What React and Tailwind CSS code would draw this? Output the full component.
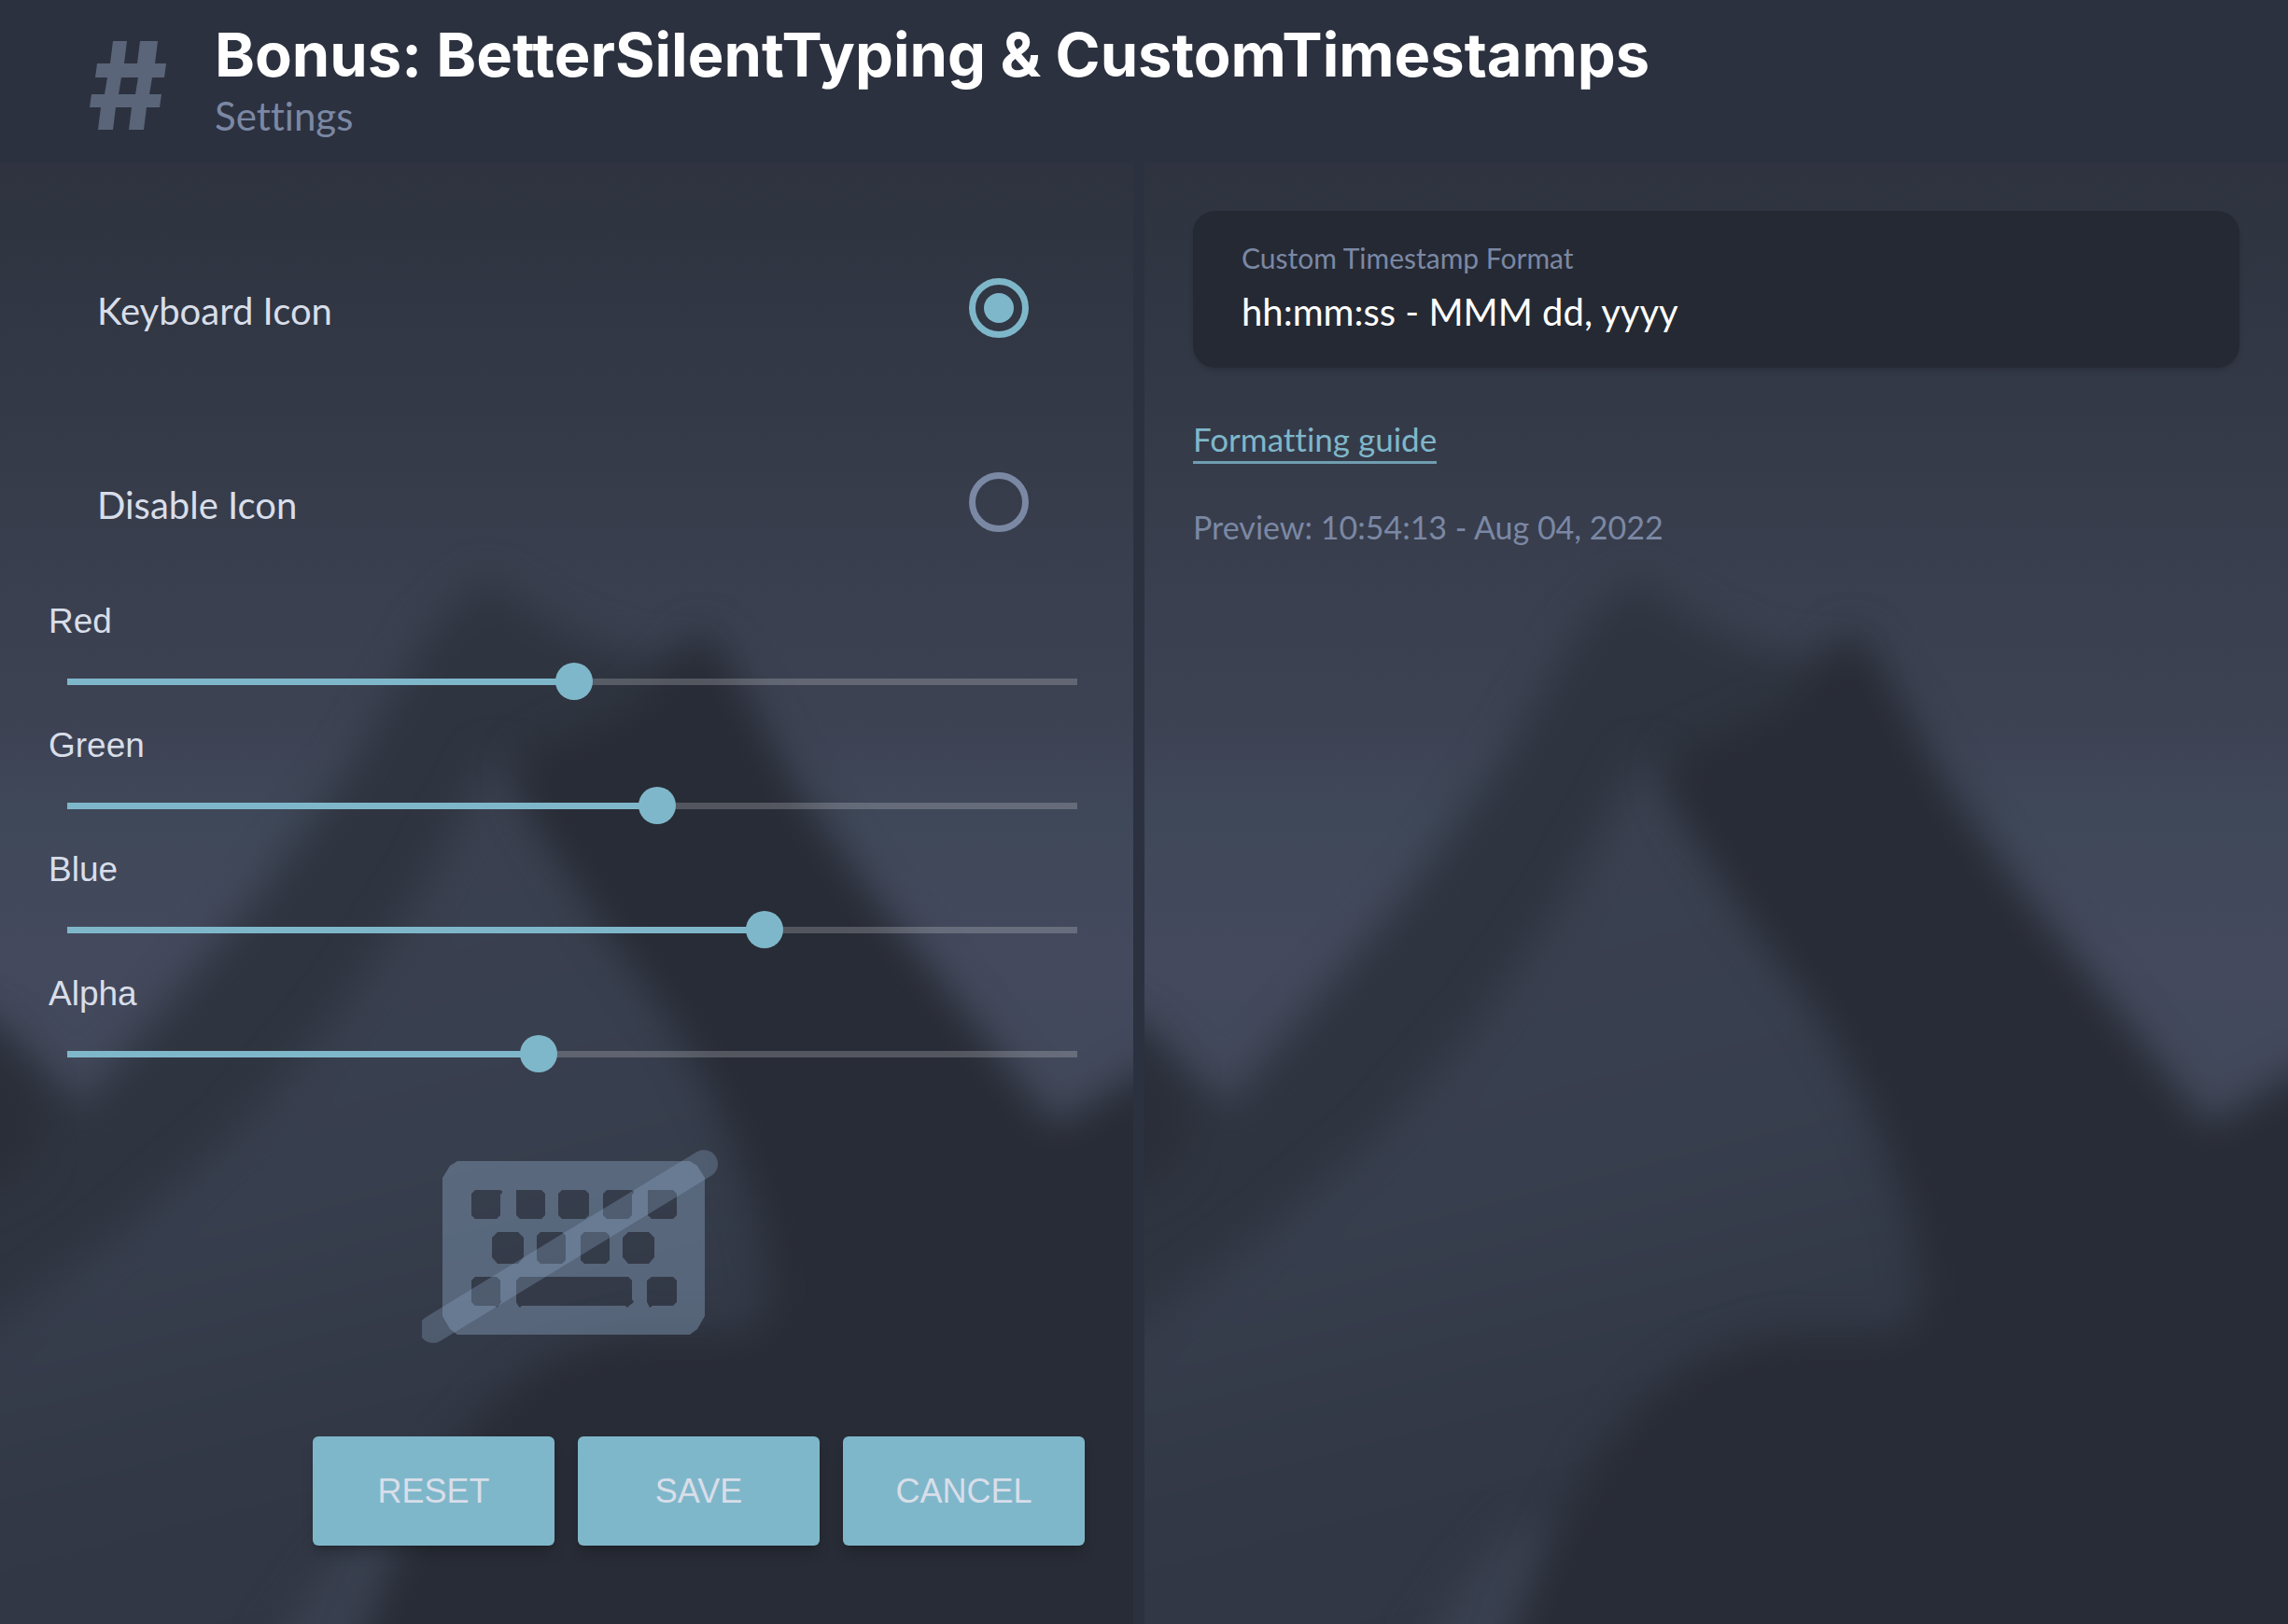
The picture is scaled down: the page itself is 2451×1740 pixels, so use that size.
import React, { useState } from "react";

function Backdrop({ id }) {
  return (
    <svg
      aria-hidden="true"
      viewBox="0 0 780 1002"
      preserveAspectRatio="none"
      className="absolute inset-0 h-full w-full"
    >
      <defs>
        <linearGradient id={id + "sky"} x1="0" y1="0" x2="0" y2="1">
          <stop offset="0" stopColor="#2e333f" />
          <stop offset="0.06" stopColor="#2f3541" />
          <stop offset="0.16" stopColor="#343947" />
          <stop offset="0.28" stopColor="#393f4e" />
          <stop offset="0.38" stopColor="#3d4253" />
          <stop offset="0.45" stopColor="#3f4859" />
          <stop offset="0.54" stopColor="#44495d" />
          <stop offset="0.64" stopColor="#42495b" />
        </linearGradient>
        <linearGradient id={id + "slope"} gradientUnits="userSpaceOnUse" x1="260" y1="430" x2="400" y2="980">
          <stop offset="0" stopColor="#3b4150" />
          <stop offset="0.45" stopColor="#373e4d" />
          <stop offset="0.75" stopColor="#323845" />
          <stop offset="1" stopColor="#303643" />
        </linearGradient>
        <filter id={id + "near"} colorInterpolationFilters="sRGB" x="-20%" y="-20%" width="140%" height="140%">
          <feGaussianBlur stdDeviation="13" />
        </filter>
        <filter id={id + "far"} colorInterpolationFilters="sRGB" x="-20%" y="-20%" width="140%" height="140%">
          <feGaussianBlur stdDeviation="14" />
        </filter>
      </defs>
      <rect width="780" height="1002" fill={"url(#" + id + "sky)"} />
      <path
        filter={"url(#" + id + "near)"}
        fill="#2f3540"
        d="M-60 560 L0 592 L56 645 L112 579 L177 502 L242 411 L296 320 L333 284 L388 319 L438 338 L480 338 L560 600 L540 1060 L-60 1060Z"
      />
      <path
        filter={"url(#" + id + "near)"}
        fill="#2a2e39"
        d="M-60 560 L0 605 L34 650 L20 690 L-60 730Z"
      />
      <path
        filter={"url(#" + id + "far)"}
        fill={"url(#" + id + "slope)"}
        d="M342 405 L284 510 L228 590 L160 668 L85 732 L-60 840 L-60 1100 L600 1100 L600 700 L440 520Z"
      />
      <path
        filter={"url(#" + id + "far)"}
        fill="#3a4150"
        d="M258 930 L222 970 L180 1030 L280 1030 L280 940Z"
      />
      <path
        filter={"url(#" + id + "near)"}
        fill="#282c36"
        d="M484 320 L504 348 L547 425 L597 497 L647 560 L696 623 L726 660 L780 627 L860 590 L860 1060 L236 1060 L254 1002 L279 945 L308 887 L348 842 L380 820 L428 804 L517 804 L532 781 L524 728 L500 661 L466 594 L411 517 L365 445 L355 415 L370 402 L433 374Z"
      />
    </svg>
  );
}

function Radio({ id, label, checked, onChange }) {
  return (
    <div className="flex h-52 items-center justify-between pr-28 pl-26">
      <label htmlFor={id} className="pt-1.5 text-[40px] leading-12 text-[#d8dee9]">
        {label}
      </label>
      <input
        id={id}
        type="radio"
        name="icon-mode"
        checked={checked}
        onChange={onChange}
        className="size-16 appearance-none rounded-full border-[7px] border-[#7b88a4] bg-clip-content p-[9px] checked:border-[#7fb7ca] checked:bg-[#7fb7ca]"
      />
    </div>
  );
}

function ColorSlider({ id, label, initial }) {
  const [value, setValue] = useState(initial);
  return (
    <div className="flex h-[133px] flex-col">
      <label
        htmlFor={id}
        className="pl-[52px] font-['Liberation_Sans',sans-serif] text-[37px] leading-12 text-[#d8dee9]"
      >
        {label}
      </label>
      <div className="pr-10 pl-[52px]">
        <div className="relative mt-5 flex h-10 items-center">
          <div className="mx-5 flex h-[7px] grow bg-white/20">
            <div className="bg-[#7fb7ca]" style={{ width: (value / 1000) * 100 + "%" }} />
          </div>
          <input
            id={id}
            type="range"
            min="0"
            max="1000"
            value={value}
            onChange={(e) => setValue(Number(e.target.value))}
            className="absolute inset-0 h-10 w-full appearance-none bg-transparent [&::-webkit-slider-thumb]:size-10 [&::-webkit-slider-thumb]:appearance-none [&::-webkit-slider-thumb]:rounded-full [&::-webkit-slider-thumb]:bg-[#7fb7ca]"
          />
        </div>
      </div>
    </div>
  );
}

function KeyboardPreview() {
  return (
    <svg viewBox="0 0 318 210" className="h-[210px] w-[318px]" aria-label="Keyboard icon preview">
      <path
        fill="#8fa9c8"
        fillOpacity="0.4"
        fillRule="evenodd"
        d="M38 14H287L295 19L303 32V180L295 194L287 200H38L30 194L22 180V32L30 19Z
        M57 45l-4 4v23l4 4h23l4-4v-22l2-2v-2l-3-1z M101 45v27l4 4h23l4-4v-23l-4-4z M150 45l-4 4v23l4 4h25l4-4v-23l-4-4z M198 45l-4 4v23l4 4h23l4-4v-22l2-2v-2l-3-1z M242 45v27l4 4h23l4-4v-23l-4-4z
        M81 90l-6 6v21l6 7h22l6-7v-21l-6-6z M127 90l-4 4v26l4 4h23l4-4v-26l-4-4z M174 90l-4 4v26l4 4h23l4-4v-26l-4-4z M221 90l-6 6v21l6 7h22l6-7v-21l-6-6z
        M57 138l-4 4v23l4 4h21l2 2l2-2l3-4l-1-3v-20l-4-4z M105 138l-4 4v23l2 4l2 2l2-2h111l2 2l2-2l5-4l-2-3v-20l-4-4z M246 138l-5 4v23l3 6l3-2h22l4-4v-23l-4-4z"
      />
      <path d="M12 194L302 17" stroke="#8fa9c8" strokeOpacity="0.3" strokeWidth="30" strokeLinecap="round" />
    </svg>
  );
}

function ActionButton({ children }) {
  return (
    <button
      type="button"
      className="h-[117px] w-[259px] rounded-md bg-[#7fb7ca] font-['Liberation_Sans',sans-serif] text-[36px] text-[#d8dee9] shadow-lg shadow-black/20"
    >
      {children}
    </button>
  );
}

export default function App() {
  const [mode, setMode] = useState("keyboard");
  const [format, setFormat] = useState("hh:mm:ss - MMM dd, yyyy");
  return (
    <div className="flex min-h-screen flex-col bg-[#2c313f] font-['Lato',sans-serif] [font-variant-ligatures:none]">
      <header className="flex h-[174px] items-start">
        <svg viewBox="0 0 84 96" className="mt-11 ml-24 h-24 w-[84px] shrink-0" aria-hidden="true">
          <path
            fill="#5a6579"
            d="M25 0H40L37 24H51L54 0H73L70 24H82L80 39H67L64 57H77L75 71H61L58 95H42L45 71H28L25 95H9L12 71H0L2 57H16L19 39H6L8 24H22ZM34 39L31 57H49L52 39Z"
          />
        </svg>
        <div className="ml-[50px]">
          <h1 className="mt-5 font-['Inter',sans-serif] text-[65px] leading-[78px] font-bold text-white">
            Bonus: BetterSilentTyping &amp; CustomTimestamps
          </h1>
          <p className="text-[42px] leading-[52px] text-[#7b88a4]">Settings</p>
        </div>
      </header>

      <main className="flex grow gap-3">
        <section className="relative flex flex-[1214] flex-col overflow-hidden">
          <Backdrop id="l" />
          <div className="relative flex grow flex-col pt-[52px]">
            <Radio id="kb" label="Keyboard Icon" checked={mode === "keyboard"} onChange={() => setMode("keyboard")} />
            <Radio id="off" label="Disable Icon" checked={mode === "off"} onChange={() => setMode("off")} />
            <ColorSlider id="red" label="Red" initial={502} />
            <ColorSlider id="green" label="Green" initial={584} />
            <ColorSlider id="blue" label="Blue" initial={690} />
            <ColorSlider id="alpha" label="Alpha" initial={467} />
            <div className="flex justify-center pt-14 pl-2">
              <KeyboardPreview />
            </div>
            <div className="flex justify-end gap-[25px] pt-[99px] pr-[52px]">
              <ActionButton>RESET</ActionButton>
              <ActionButton>SAVE</ActionButton>
              <ActionButton>CANCEL</ActionButton>
            </div>
          </div>
        </section>

        <section className="relative flex flex-[1225] flex-col overflow-hidden">
          <Backdrop id="r" />
          <div className="relative flex flex-col items-start px-[52px] pt-[52px]">
            <div className="flex h-[168px] w-full flex-col rounded-3xl bg-[#252933] px-[52px] pt-[30px] shadow-md">
              <label htmlFor="format" className="text-[30px] leading-10 text-[#7b88a4]">
                Custom Timestamp Format
              </label>
              <input
                id="format"
                type="text"
                value={format}
                onChange={(e) => setFormat(e.target.value)}
                className="mt-3.5 w-full bg-transparent text-[40px] leading-12 text-white outline-none"
              />
            </div>
            <a
              href="#guide"
              className="mt-[52px] border-b-[3px] border-[#7fb7ca]/80 text-[35px] leading-12 text-[#7fb7ca]"
            >
              Formatting guide
            </a>
            <p className="mt-11 text-[34px] leading-12 text-[#7b88a4]">Preview: 10:54:13 - Aug 04, 2022</p>
          </div>
        </section>
      </main>
    </div>
  );
}
